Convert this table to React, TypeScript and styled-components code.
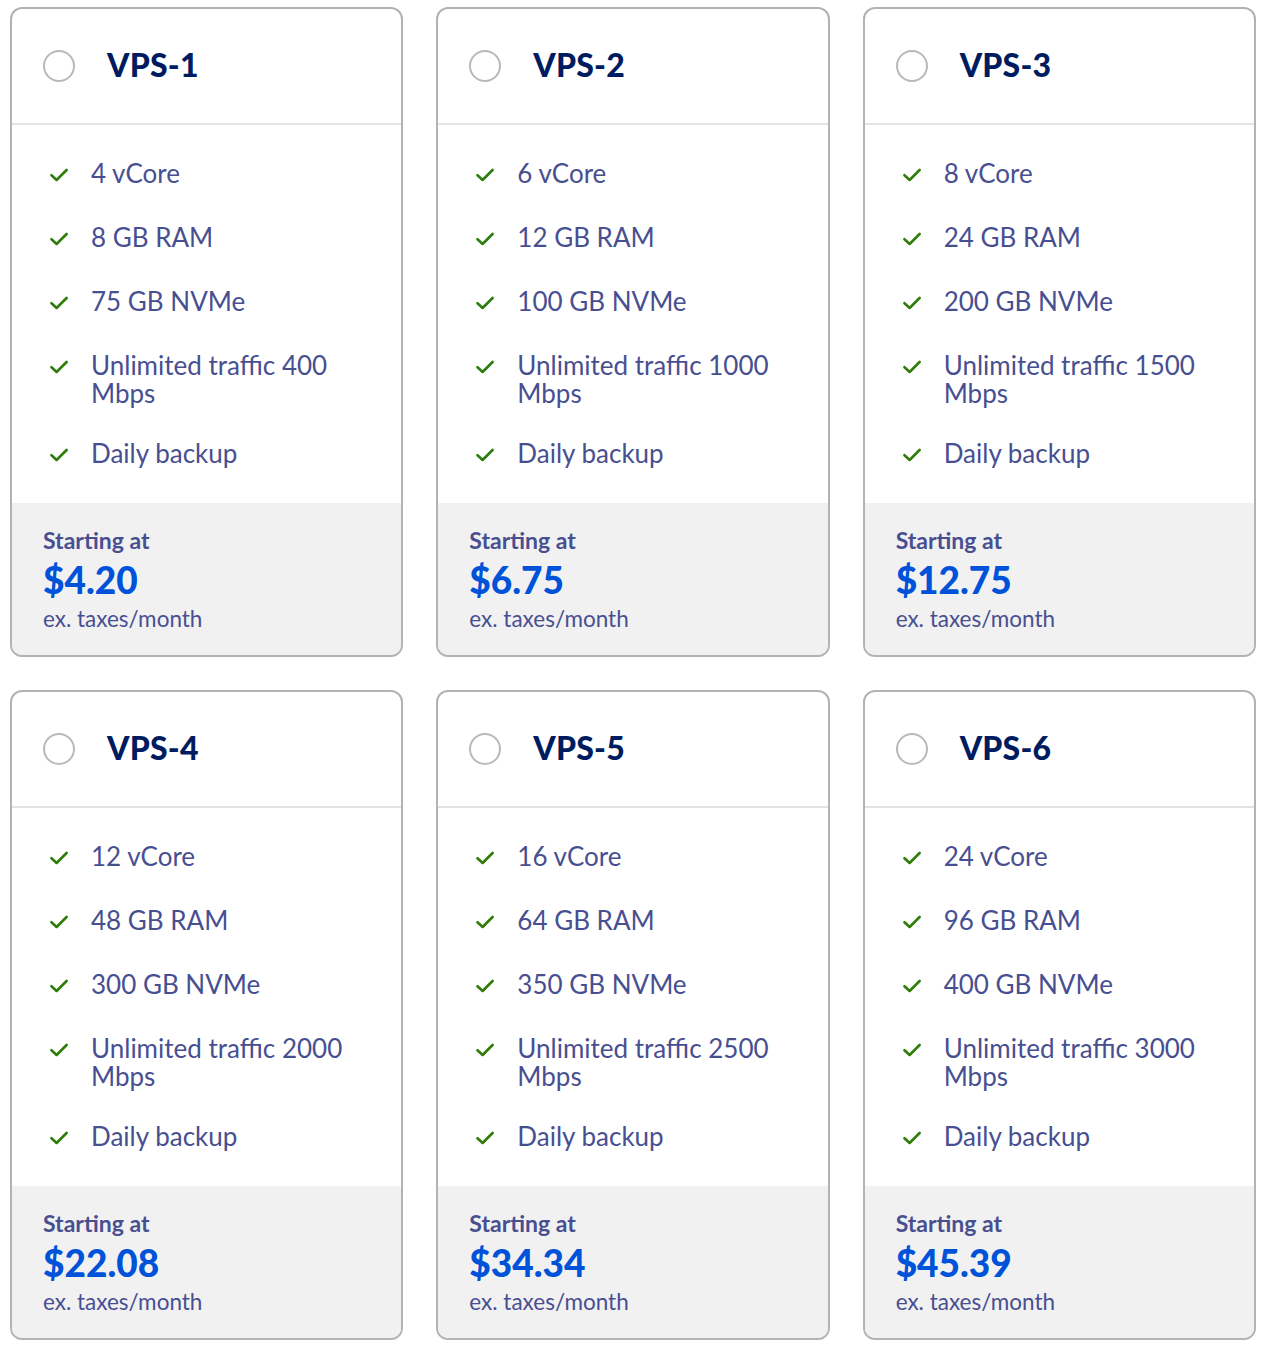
import React from "react";
import styled, { createGlobalStyle } from "styled-components";

const GlobalStyle = createGlobalStyle`
  html, body { margin: 0; padding: 0; background: #ffffff; }
  body { font-family: Lato, "Liberation Sans", sans-serif; }
  * { box-sizing: border-box; }
`;

const Page = styled.div`
  padding: 7px 10px 8px 10px;
`;

const Grid = styled.div`
  display: grid;
  grid-template-columns: repeat(3, 1fr);
  column-gap: 33px;
  row-gap: 33px;
`;

const Card = styled.div`
  border: 2px solid #b3b3b3;
  border-radius: 12px;
  overflow: hidden;
  display: flex;
  flex-direction: column;
  background: #ffffff;
`;

const Header = styled.div`
  height: 116px;
  display: flex;
  align-items: center;
  padding-left: 31px;
  padding-bottom: 3px;
  gap: 32px;
  border-bottom: 2px solid #e3e3e3;
`;

const Radio = styled.span`
  width: 32px;
  height: 32px;
  border-radius: 50%;
  border: 2px solid #b8b8b8;
  flex: none;
  margin-top: 2px;
`;

const Title = styled.h2`
  margin: 0;
  font-size: 32px;
  font-weight: 900;
  color: #001c60;
  letter-spacing: 0.2px;
`;

const Features = styled.ul`
  list-style: none;
  margin: 0;
  padding: 34px 40px 32px 38px;
  display: flex;
  flex-direction: column;
  gap: 32px;
`;

const Feature = styled.li`
  display: flex;
  align-items: flex-start;
  gap: 23px;
  min-height: 32px;
`;

const CheckBox = styled.span`
  flex: none;
  width: 18px;
  height: 32px;
  display: flex;
  align-items: center;
`;

const FeatureText = styled.span`
  font-size: 26px;
  line-height: 28px;
  color: #484f91;
`;

const Footer = styled.div`
  background: #f1f1f1;
  padding: 24px 31px 23px 31px;
  display: flex;
  flex-direction: column;
  flex: 1;
`;

const StartLabel = styled.div`
  font-size: 23px;
  line-height: 26px;
  font-weight: 700;
  color: #484f91;
`;

const Price = styled.div`
  margin-top: 7px;
  font-size: 37px;
  line-height: 40px;
  font-weight: 900;
  color: #0052d9;
`;

const Note = styled.div`
  margin-top: 6px;
  font-size: 22.5px;
  line-height: 26px;
  color: #484f91;
`;

const Check = () => (
  <svg width="18" height="14" viewBox="0 0 18 14" fill="none">
    <path d="M1.5 7.2 L6.6 12 L16.6 2" stroke="#2f7d0a" strokeWidth="2.6" strokeLinecap="round" strokeLinejoin="round" />
  </svg>
);

type Plan = { name: string; core: number; ram: number; disk: number; traffic: number; price: string };

const plans: Plan[] = [
  { name: "VPS-1", core: 4, ram: 8, disk: 75, traffic: 400, price: "$4.20" },
  { name: "VPS-2", core: 6, ram: 12, disk: 100, traffic: 1000, price: "$6.75" },
  { name: "VPS-3", core: 8, ram: 24, disk: 200, traffic: 1500, price: "$12.75" },
  { name: "VPS-4", core: 12, ram: 48, disk: 300, traffic: 2000, price: "$22.08" },
  { name: "VPS-5", core: 16, ram: 64, disk: 350, traffic: 2500, price: "$34.34" },
  { name: "VPS-6", core: 24, ram: 96, disk: 400, traffic: 3000, price: "$45.39" },
];

export default function App() {
  return (
    <>
      <GlobalStyle />
      <Page>
        <Grid>
          {plans.map((p) => {
            const feats = [
              `${p.core} vCore`,
              `${p.ram} GB RAM`,
              `${p.disk} GB NVMe`,
              `Unlimited traffic ${p.traffic} Mbps`,
              "Daily backup",
            ];
            return (
              <Card key={p.name}>
                <Header>
                  <Radio />
                  <Title>{p.name}</Title>
                </Header>
                <Features>
                  {feats.map((f) => (
                    <Feature key={f}>
                      <CheckBox>
                        <Check />
                      </CheckBox>
                      <FeatureText>{f}</FeatureText>
                    </Feature>
                  ))}
                </Features>
                <Footer>
                  <StartLabel>Starting at</StartLabel>
                  <Price>{p.price}</Price>
                  <Note>ex. taxes/month</Note>
                </Footer>
              </Card>
            );
          })}
        </Grid>
      </Page>
    </>
  );
}
